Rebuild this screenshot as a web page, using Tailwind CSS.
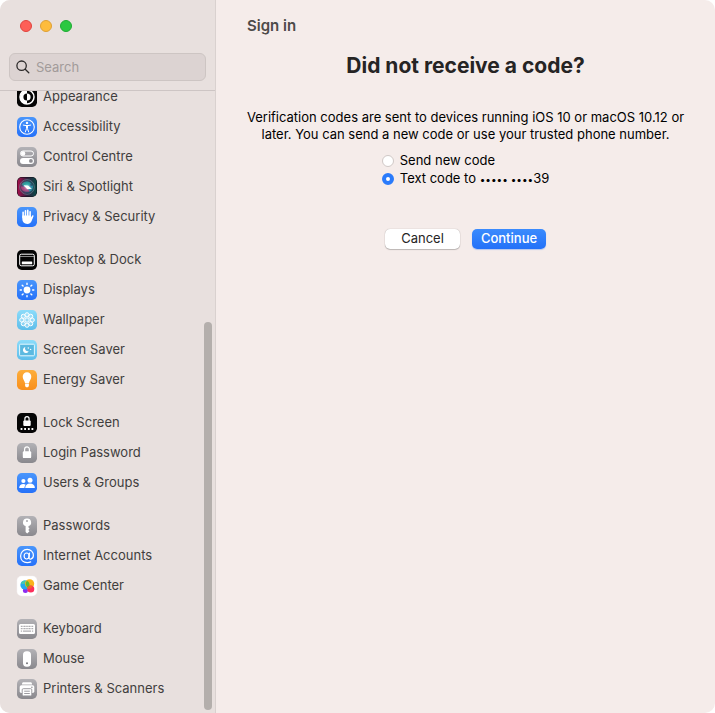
<!DOCTYPE html>
<html lang="en">
<head>
  <meta charset="UTF-8" />
  <meta name="viewport" content="width=device-width, initial-scale=1" />
  <title>System Settings</title>
  <script src="https://cdn.jsdelivr.net/npm/@tailwindcss/browser@4"></script>
</head>
<body class="bg-white font-['Inter','Liberation_Sans',sans-serif] text-[13px]">

  <!-- Shared gradients -->
  <svg class="absolute size-0" aria-hidden="true">
    <defs>
      <linearGradient id="blue" x1="0" y1="0" x2="0" y2="1"><stop stop-color="#4a96fb" /><stop offset="1" stop-color="#2571f9" /></linearGradient>
      <linearGradient id="gray" x1="0" y1="0" x2="0" y2="1"><stop stop-color="#b3b2b6" /><stop offset="1" stop-color="#89888d" /></linearGradient>
      <linearGradient id="cyan" x1="0" y1="0" x2="0" y2="1"><stop stop-color="#8cdcfa" /><stop offset="1" stop-color="#5dbdea" /></linearGradient>
      <linearGradient id="orange" x1="0" y1="0" x2="0" y2="1"><stop stop-color="#fdae3c" /><stop offset="1" stop-color="#f98f1b" /></linearGradient>
      <linearGradient id="siri" x1="0" y1="0" x2="1" y2="0"><stop stop-color="#a80f4c" /><stop offset=".5" stop-color="#33203f" /><stop offset="1" stop-color="#084a46" /></linearGradient>
      <radialGradient id="orb"><stop stop-color="#ffffff" /><stop offset=".2" stop-color="#a9dcf0" /><stop offset=".55" stop-color="#3f7fa8" stop-opacity=".7" /><stop offset="1" stop-color="#237987" stop-opacity=".1" /></radialGradient>
    </defs>
  </svg>

  <div class="flex h-screen overflow-hidden rounded-[10px] bg-[#f5ecea]">

    <!-- Sidebar -->
    <aside class="flex w-[216px] shrink-0 flex-col border-r border-[#d9d1cf] bg-[#e8e0de]">
      <div class="border-b border-[#cdc5c4] px-[9px] pt-5 pb-[9px]">
        <div class="flex gap-2 pl-[11px]">
          <button aria-label="Close" class="size-3 rounded-full border border-[#e0443e] bg-[#fe5f57]"></button>
          <button aria-label="Minimise" class="size-3 rounded-full border border-[#dea035] bg-[#febc3c]"></button>
          <button aria-label="Zoom" class="size-3 rounded-full border border-[#1eab33] bg-[#2bc840]"></button>
        </div>
        <label class="mt-[21px] flex h-7 items-center gap-1.5 rounded-md border border-[#cdc5c3] bg-[#dcd3d2] px-1.5">
          <svg class="size-[14px] shrink-0" viewBox="0 0 14 14" fill="none" stroke="#2c2a2a" stroke-width="1.3" stroke-linecap="round">
            <circle cx="5.6" cy="5.7" r="4.7" />
            <path d="M9.2 9.2 12.8 12.7" />
          </svg>
          <input type="text" placeholder="Search" aria-label="Search" class="w-full min-w-0 bg-transparent pt-px outline-none placeholder:text-[#a29b9a]" />
        </label>
      </div>

      <div class="relative min-h-0 flex-1 overflow-hidden">
        <nav class="-mt-[9px] flex flex-col gap-[13px] pl-[17px] text-[#413e3d]">
          <div>
            <a href="#" class="flex h-[30px] items-center gap-1.5">
              <svg class="size-5" viewBox="0 0 20 20"><rect width="20" height="20" rx="4.8" fill="#050505" /><circle cx="10" cy="10" r="7" fill="none" stroke="#fff" stroke-width="1.5" /><path d="M10 3a7 7 0 0 0 0 14z" fill="#fff" /><path d="M10 6.4a3.6 3.6 0 0 0 0 7.2z" fill="#050505" /><path d="M10 6.4a3.6 3.6 0 0 1 0 7.2z" fill="#fff" /></svg>
              Appearance
            </a>
            <a href="#" class="flex h-[30px] items-center gap-1.5">
              <svg class="size-5" viewBox="0 0 20 20"><rect width="20" height="20" rx="4.8" fill="url(#blue)" /><circle cx="10" cy="10" r="7.3" fill="none" stroke="#fff" stroke-width="1.1" /><circle cx="10" cy="5.9" r="1.2" fill="#fff" /><path d="M6.3 8.1 9 8.6h2l2.7-.5M9.5 8.6v3.1L8.3 15M10.5 8.6v3.1l1.2 3.3" fill="none" stroke="#fff" stroke-width="1" stroke-linecap="round" stroke-linejoin="round" /></svg>
              Accessibility
            </a>
            <a href="#" class="flex h-[30px] items-center gap-1.5">
              <svg class="size-5" viewBox="0 0 20 20"><rect width="20" height="20" rx="4.8" fill="url(#gray)" /><rect x="3.5" y="4" width="13" height="5" rx="2.5" fill="none" stroke="#fff" stroke-width="1" /><circle cx="6.1" cy="6.5" r="2.2" fill="#fff" /><rect x="3" y="10.9" width="14" height="6" rx="3" fill="#fff" /><circle cx="13.9" cy="13.9" r="1.9" fill="#8e8d92" /></svg>
              Control Centre
            </a>
            <a href="#" class="flex h-[30px] items-center gap-1.5">
              <svg class="size-5" viewBox="0 0 20 20"><rect width="20" height="20" rx="4.8" fill="#0b0b15" /><rect x=".5" y=".5" width="19" height="19" rx="4.4" fill="url(#siri)" /><circle cx="10" cy="10" r="7.4" fill="url(#orb)" stroke="#6f8b9c" stroke-width=".6" /><path d="M4.5 7.5c2-3.5 7-4 9.5-1L10 10z" fill="#25c0a8" opacity=".6" /><path d="M4 9.5c0 4.5 5 6.5 9 4.7L9.5 10z" fill="#e2407f" opacity=".6" /><path d="M16 8.5c.5 3-1 5.5-3.5 6L10.5 10z" fill="#2fb7c9" opacity=".5" /><path d="M6.5 8.3 11 8.6l3.8 3.2-4.5.4z" fill="#fff" /></svg>
              Siri &amp; Spotlight
            </a>
            <a href="#" class="flex h-[30px] items-center gap-1.5">
              <svg class="size-5" viewBox="0 0 20 20"><rect width="20" height="20" rx="4.8" fill="url(#blue)" /><path d="M6.1 10.5V5.3M8.5 9V3.7M10.8 9V3.4M13.1 9.5V4.8" stroke="#fff" stroke-width="1.6" stroke-linecap="round" /><path d="M5.3 8.5h8.6v2.1l1.2-1.8c.5-.8 1.7-.4 1.4.5l-1.7 4.3c-.8 2-2.1 3.4-4.6 3.4-3 0-4.9-1.9-4.9-4.9z" fill="#fff" /></svg>
              Privacy &amp; Security
            </a>
          </div>

          <div>
            <a href="#" class="flex h-[30px] items-center gap-1.5">
              <svg class="size-5" viewBox="0 0 20 20"><rect width="20" height="20" rx="4.8" fill="#050505" /><rect x="2.7" y="4.2" width="14.6" height="11.6" rx="1.6" fill="none" stroke="#fff" stroke-width="1" /><path d="M3 6.5h14" stroke="#aaa" stroke-width=".8" /><rect x="4.8" y="11.6" width="10.4" height="2.6" rx=".5" fill="#fff" /></svg>
              Desktop &amp; Dock
            </a>
            <a href="#" class="flex h-[30px] items-center gap-1.5">
              <svg class="size-5" viewBox="0 0 20 20"><rect width="20" height="20" rx="4.8" fill="url(#blue)" /><circle cx="10" cy="10" r="3.4" fill="#fff" /><path d="M10 3.2v1.2M10 15.6v1.2M3.2 10h1.2M15.6 10h1.2M5.2 5.2l.9.9M13.9 13.9l.9.9M14.8 5.2l-.9.9M6.1 13.9l-.9.9" stroke="#fff" stroke-width="1.4" stroke-linecap="round" /></svg>
              Displays
            </a>
            <a href="#" class="flex h-[30px] items-center gap-1.5">
              <svg class="size-5" viewBox="0 0 20 20"><rect width="20" height="20" rx="4.8" fill="url(#cyan)" /><g fill="#fff" fill-opacity=".25" stroke="#fff" stroke-width="1"><circle cx="10" cy="4.8" r="2.1" /><circle cx="13.7" cy="6.3" r="2.1" /><circle cx="15.2" cy="10" r="2.1" /><circle cx="13.7" cy="13.7" r="2.1" /><circle cx="10" cy="15.2" r="2.1" /><circle cx="6.3" cy="13.7" r="2.1" /><circle cx="4.8" cy="10" r="2.1" /><circle cx="6.3" cy="6.3" r="2.1" /><circle cx="10" cy="10" r="2.2" /></g></svg>
              Wallpaper
            </a>
            <a href="#" class="flex h-[30px] items-center gap-1.5">
              <svg class="size-5" viewBox="0 0 20 20"><rect width="20" height="20" rx="4.8" fill="url(#cyan)" /><rect x="2.6" y="4.2" width="14.8" height="11.6" rx="1" fill="#5cb9e0" stroke="#e4f8ff" stroke-width="1" /><path d="M8.3 7.1a3 3 0 1 0 3.4 4.1 2.9 2.9 0 0 1-3.4-4.1z" fill="#fff" /><circle cx="11.3" cy="8" r=".7" fill="#fff" /><circle cx="13.6" cy="9.4" r=".7" fill="#fff" /></svg>
              Screen Saver
            </a>
            <a href="#" class="flex h-[30px] items-center gap-1.5">
              <svg class="size-5" viewBox="0 0 20 20"><rect width="20" height="20" rx="4.8" fill="url(#orange)" /><path d="M10 2.3a4.3 4.3 0 0 0-4.3 4.4c0 2.6 2 3.7 2.3 6.4h4c.3-2.7 2.3-3.8 2.3-6.4A4.3 4.3 0 0 0 10 2.3zM8.1 13.5h3.8v1.9c0 1.2-.8 1.8-1.9 1.8s-1.9-.6-1.9-1.8z" fill="#fff" /></svg>
              Energy Saver
            </a>
          </div>

          <div>
            <a href="#" class="flex h-[30px] items-center gap-1.5">
              <svg class="size-5" viewBox="0 0 20 20"><rect width="20" height="20" rx="4.8" fill="#050505" /><path d="M7.9 8V5.8a2.1 2.1 0 0 1 4.2 0V8" fill="none" stroke="#fff" stroke-width="1.2" /><rect x="6.3" y="7.4" width="7.4" height="5.6" rx="1" fill="#fff" /><path d="M3.6 15.1h1.8v2H3.6zM7.2 15.1H9v2H7.2zM10.9 15.1h1.8v2h-1.8zM14.5 15.1h1.8v2h-1.8z" fill="#fff" /></svg>
              Lock Screen
            </a>
            <a href="#" class="flex h-[30px] items-center gap-1.5">
              <svg class="size-5" viewBox="0 0 20 20"><rect width="20" height="20" rx="4.8" fill="url(#gray)" /><path d="M7.6 9V6.3a2.4 2.4 0 0 1 4.8 0V9" fill="none" stroke="#fff" stroke-width="1.2" /><rect x="5.8" y="8.3" width="8.4" height="6.8" rx="1.2" fill="#fff" /></svg>
              Login Password
            </a>
            <a href="#" class="flex h-[30px] items-center gap-1.5">
              <svg class="size-5" viewBox="0 0 20 20"><rect width="20" height="20" rx="4.8" fill="url(#blue)" /><g fill="#fff"><circle cx="6.4" cy="8" r="2.1" /><path d="M2.2 14.9c0-2.5 1.8-4 4.1-4 1 0 1.8.3 2.4.8-.8.8-1.2 1.9-1.3 3.2z" /><circle cx="13" cy="7.3" r="2.5" /><path d="M8.2 14.9c0-2.8 2-4.5 4.8-4.5s4.9 1.7 4.9 4.5z" /></g></svg>
              Users &amp; Groups
            </a>
          </div>

          <div>
            <a href="#" class="flex h-[30px] items-center gap-1.5">
              <svg class="size-5" viewBox="0 0 20 20"><rect width="20" height="20" rx="4.8" fill="url(#gray)" /><path fill-rule="evenodd" d="M10 2.6a3.8 3.8 0 0 0-1.4 7.4v5.9l1.6 1.7 2.3-2.3-1.2-1.3 1.2-1.4-1-1.2V10A3.8 3.8 0 0 0 10 2.6zm0 1.5a1 1 0 1 1 0 2 1 1 0 0 1 0-2z" fill="#fff" /></svg>
              Passwords
            </a>
            <a href="#" class="flex h-[30px] items-center gap-1.5">
              <svg class="size-5" viewBox="0 0 20 20"><rect width="20" height="20" rx="4.8" fill="url(#blue)" /><g fill="none" stroke="#fff" stroke-width="1.2" stroke-linecap="round"><ellipse cx="9.6" cy="10" rx="2.5" ry="3" /><path d="M12.5 7 12 11.3c-.2 1.6.8 2 1.8 1.8 1.6-.4 2.6-1.9 2.6-3.8 0-3.2-2.6-5.9-6.2-5.9-3.9 0-6.6 2.9-6.6 6.7 0 3.9 2.7 6.5 6.6 6.5 1.3 0 2.5-.2 3.5-.7" /></g></svg>
              Internet Accounts
            </a>
            <a href="#" class="flex h-[30px] items-center gap-1.5">
              <svg class="size-5 overflow-visible" viewBox="0 0 20 20"><rect x="-.3" y="-.3" width="20.6" height="20.6" rx="5" fill="#fff" stroke="#e6dcdb" stroke-width=".4" /><circle cx="8.4" cy="14.4" r="2.5" fill="#8c2cf0" /><circle cx="8" cy="9" r="4.6" fill="#24a9ee" /><path d="M3.8 7.2a4.6 4.6 0 0 1 7.3-1.6c-1.2 2.4-4 3.2-7.3 1.6z" fill="#45c9b0" /><circle cx="12.6" cy="7.8" r="4.6" fill="#f9b21d" /><path d="M9.9 4.8a4.6 4.6 0 0 1 1.6 7.2 4.6 4.6 0 0 1-1.6-7.2z" fill="#5cba35" /><circle cx="13.8" cy="13" r="3.5" fill="#fc2f5c" /><path d="M10.3 12.8a3.5 3.5 0 0 1 5.6-2.5 4.6 4.6 0 0 1-5.6 2.5z" fill="#f5602b" /></svg>
              Game Center
            </a>
          </div>

          <div>
            <a href="#" class="flex h-[30px] items-center gap-1.5">
              <svg class="size-5" viewBox="0 0 20 20"><rect width="20" height="20" rx="4.8" fill="url(#gray)" /><rect x="2" y="5" width="16" height="10" rx="1.5" fill="#fff" /><path d="M3.8 7.4h12.4M3.8 9.6h12.4" stroke="#aeadb1" stroke-width="1.3" stroke-dasharray="1.2 .4" /><path d="M3.8 12.2h1.3M6 12.2h8M14.9 12.2h1.3" stroke="#aeadb1" stroke-width="1.2" /></svg>
              Keyboard
            </a>
            <a href="#" class="flex h-[30px] items-center gap-1.5">
              <svg class="size-5" viewBox="0 0 20 20"><rect width="20" height="20" rx="4.8" fill="url(#gray)" /><rect x="6" y="2.3" width="8" height="15.4" rx="3.6" fill="#fff" /><circle cx="10" cy="14.2" r="1" fill="#77767b" /></svg>
              Mouse
            </a>
            <a href="#" class="flex h-[30px] items-center gap-1.5">
              <svg class="size-5" viewBox="0 0 20 20"><rect width="20" height="20" rx="4.8" fill="url(#gray)" /><path d="M5 5.6V4.9c0-1 .6-1.6 1.6-1.6h6.8c1 0 1.6.6 1.6 1.6v.7z" fill="#fff" /><rect x="2.7" y="6.3" width="14.6" height="7.6" rx="1.6" fill="#fff" /><circle cx="14.9" cy="8.3" r=".7" fill="#89888d" /><rect x="5.2" y="9.7" width="9.6" height="7.2" rx="1.1" fill="#fff" stroke="#929196" stroke-width=".9" /><path d="M7.2 12.2h5.6M7.2 14.5h5.6" stroke="#929196" stroke-width=".9" /></svg>
              Printers &amp; Scanners
            </a>
          </div>
        </nav>
        <!-- Scroll thumb -->
        <div class="absolute top-[231px] right-[3px] bottom-[3px] w-2 rounded-full bg-[#b4afac]"></div>
      </div>
    </aside>

    <!-- Content -->
    <main class="flex min-w-0 flex-1 flex-col pt-4 text-black">
      <h1 class="px-[31px] text-[15px] leading-5 font-semibold text-[#4d4a49]">Sign in</h1>
      <h2 class="mt-[17px] text-center text-[21px] leading-[26px] font-bold text-[#262424]">Did not receive a code?</h2>
      <form class="mt-[30px] flex flex-col items-center px-4">
        <p class="text-center leading-[17px]">Verification codes are sent to devices running iOS 10 or macOS 10.12 or<br />later. You can send a new code or use your trusted phone number.</p>
        <div class="mt-[9px] flex flex-col">
          <label class="flex h-[18px] items-center gap-1.5">
            <input type="radio" name="method" class="size-3 appearance-none rounded-full border border-[#d0c8c6] bg-white checked:border-4 checked:border-[#2a7bfb]" />
            Send new code
          </label>
          <label class="flex h-[18px] items-center gap-1.5">
            <input type="radio" name="method" checked class="size-3 appearance-none rounded-full border border-[#d0c8c6] bg-white checked:border-4 checked:border-[#2a7bfb]" />
            <span>Text code to <span class="text-[10px]">••••• ••••</span>39</span>
          </label>
        </div>
        <div class="mt-[41px] flex gap-3">
          <button type="button" class="h-5 w-[75px] rounded-[5px] bg-white text-[#262424] shadow-[0_0_1px_rgba(0,0,0,0.35),0_1px_1px_rgba(0,0,0,0.2)]">Cancel</button>
          <button type="submit" class="h-5 w-[74px] rounded-[5px] bg-linear-to-b from-[#3b8bfd] to-[#2371f8] font-medium text-white shadow-[0_1px_1px_rgba(35,113,248,0.3)]">Continue</button>
        </div>
      </form>
    </main>
  </div>

</body>
</html>
